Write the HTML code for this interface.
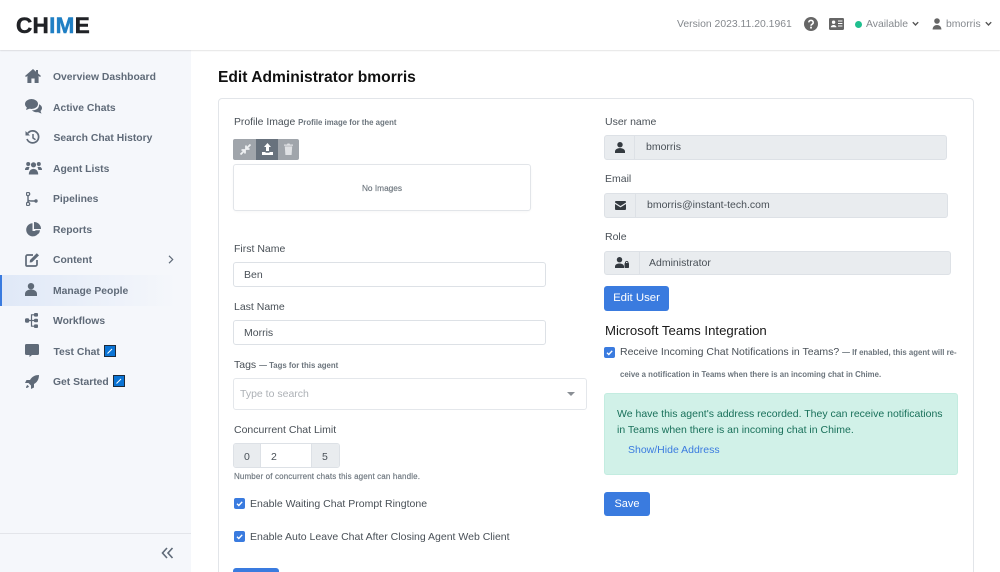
<!DOCTYPE html>
<html><head><meta charset="utf-8"><style>
*{box-sizing:border-box}
html,body{margin:0;padding:0;width:1000px;height:572px;overflow:hidden}
body{background:#fff;position:relative;font-family:"Liberation Sans",sans-serif;font-size:11px;color:#495057}
#w{position:absolute;left:0;top:0;width:1000px;height:572px;overflow:hidden}
.t{position:absolute;white-space:nowrap;line-height:14px}
.b{position:absolute}
.nav{position:absolute;left:53px;font-size:10.35px;font-weight:700;color:#5f6a78;line-height:14px;white-space:nowrap}
svg{position:absolute;display:block}
.inp{position:absolute;border:1px solid #dde1e6;border-radius:3px;background:#fff}
.dis{position:absolute;border:1px solid #dde1e6;border-radius:3px;background:#e9ecef}
.sm{font-size:7.8px;font-weight:700;color:#6c757d}
.btn{position:absolute;background:#3a7bdf;border-radius:3px;color:#fff;font-size:11px;text-align:center}
.cb{position:absolute;width:11px;height:11px;background:#3a7bdf;border-radius:2px}
</style></head><body><div id="w">
<!-- sidebar -->
<div class="b" style="left:0;top:50px;width:191px;height:522px;background:#f5f7fb"></div>
<div class="b" style="left:0;top:275px;width:191px;height:31px;background:linear-gradient(90deg,#dfe8f7,#f5f7fb 92%)"></div>
<div class="b" style="left:0;top:275px;width:2px;height:31px;background:#3a7bdf"></div>
<div class="b" style="left:0;top:533px;width:191px;height:1px;background:#e3e5ea"></div>
<!-- topbar -->
<div class="b" style="left:0;top:0;width:1000px;height:50px;background:#fff;box-shadow:0 1px 1px rgba(0,0,0,.1)"></div>
<div class="t" style="left:16px;top:13px;font-size:22.5px;line-height:25px;font-weight:700;color:#202226;letter-spacing:.3px;-webkit-text-stroke:.5px #202226">CH<span style="color:#1f7fc4;-webkit-text-stroke:.5px #1f7fc4">IM</span>E</div>
<div class="t" style="left:677px;top:18px;font-size:10.4px;color:#85898e">Version 2023.11.20.1961</div>
<svg style="left:804px;top:17px" width="14" height="14" viewBox="0 0 14 14"><circle cx="7" cy="7" r="7" fill="#666"/><path d="M4.8 5.4a2.2 2.1 0 1 1 3.2 1.9c-.7.4-1 .7-1 1.400" fill="none" stroke="#fff" stroke-width="1.5"/><rect x="6.1" y="9.7" width="1.8" height="1.8" fill="#fff"/></svg>
<svg style="left:829px;top:18px" width="15" height="12" viewBox="0 0 15 12"><rect width="15" height="12" rx="1.2" fill="#666"/><circle cx="4.6" cy="4.2" r="1.7" fill="#fff"/><path d="M1.8 9.2c0-3 5.6-3 5.6 0z" fill="#fff"/><path d="M9 3h4.4M9 5.5h4.4M9 8h4.4" stroke="#fff" stroke-width="1"/></svg>
<div class="b" style="left:855px;top:21px;width:7px;height:7px;border-radius:50%;background:#1fbf8f"></div>
<div class="t" style="left:866px;top:18px;font-size:10.4px;color:#85898e">Available</div>
<svg style="left:912px;top:21px" width="7" height="6" viewBox="0 0 7 6"><path d="M.8 1.2 3.5 4 6.2 1.2" fill="none" stroke="#555" stroke-width="1.4"/></svg>
<svg style="left:932px;top:18px" width="10" height="12" viewBox="0 0 10 12"><circle cx="5" cy="3" r="2.8" fill="#666"/><path d="M.6 11.5c0-6 8.8-6 8.8 0z" fill="#666"/></svg>
<div class="t" style="left:946px;top:18px;font-size:10.4px;color:#85898e">bmorris</div>
<svg style="left:985px;top:21px" width="7" height="6" viewBox="0 0 7 6"><path d="M.8 1.2 3.5 4 6.2 1.2" fill="none" stroke="#555" stroke-width="1.4"/></svg>

<!-- nav icons -->
<svg style="left:25px;top:69px" width="16" height="14" viewBox="0 0 16 14"><path d="M8 0 0 7l1 1 1.4-1.1V14h4V9.500h3.200V14h4V6.900L15 8l1-1-3-2.600V1h-2v1.700z" fill="#5f6a78"/></svg>
<svg style="left:25px;top:99px" width="17" height="15" viewBox="0 0 17 15"><ellipse cx="6.5" cy="5" rx="6.5" ry="5" fill="#5f6a78"/><path d="M2 8 1 11l4-1.500z" fill="#5f6a78"/><path d="M14 5.200c1.900.8 3 2.200 3 3.800 0 1.200-.6 2.300-1.500 3l1 2.600-3.500-1.500c-2.500.5-5-.3-6-1.800 4 .2 7.500-2.200 7-6.100z" fill="#5f6a78"/></svg>
<svg style="left:25px;top:130px" width="15" height="15" viewBox="0 0 15 15"><path d="M2.800 3.300A6 6 0 1 1 2 9" fill="none" stroke="#5f6a78" stroke-width="1.7"/><path d="M.5 1v4.500H5z" fill="#5f6a78"/><path d="M8 4v4l2.500 1.700" fill="none" stroke="#5f6a78" stroke-width="1.5"/></svg>
<svg style="left:25px;top:161px" width="17" height="14" viewBox="0 0 17 14"><circle cx="3.2" cy="3" r="2" fill="#5f6a78"/><circle cx="13.8" cy="3" r="2" fill="#5f6a78"/><circle cx="8.5" cy="3.8" r="2.6" fill="#5f6a78"/><path d="M0 9c0-3 2-3.500 4.500-3L3.500 9zM17 9c0-3-2-3.500-4.500-3l1 3z" fill="#5f6a78"/><path d="M3.800 13.500c0-7.500 9.400-7.500 9.400 0z" fill="#5f6a78"/></svg>
<svg style="left:26px;top:192px" width="12" height="14" viewBox="0 0 12 14"><circle cx="2" cy="2" r="1.7" fill="none" stroke="#5f6a78" stroke-width="1.3"/><circle cx="2" cy="12" r="1.7" fill="none" stroke="#5f6a78" stroke-width="1.3"/><path d="M2 4v6M2 7.500c0 1.500 2 1.500 4 1.500h3" fill="none" stroke="#5f6a78" stroke-width="1.4"/><circle cx="10" cy="9" r="1.7" fill="#5f6a78"/></svg>
<svg style="left:26px;top:222px" width="15" height="15" viewBox="0 0 15 15"><path d="M6.500 1.200A6.600 6.600 0 1 0 13.300 9H6.500z" fill="#5f6a78"/><path d="M8 0a7 7 0 0 1 7 7H8z" fill="#5f6a78"/><path d="M14 8.300h-5l3.300 3.700A6 6 0 0 0 14 8.300z" fill="#5f6a78"/></svg>
<svg style="left:25px;top:252px" width="15" height="15" viewBox="0 0 15 15"><path d="M8 3H2.500A1.500 1.500 0 0 0 1 4.500v8.500A1 1 0 0 0 2 14h8.500a1.500 1.500 0 0 0 1.500-1.500V8" fill="none" stroke="#5f6a78" stroke-width="1.7"/><path d="M5 8 11.800 1.200l2.200 2.200L7 10.200 4.700 10.500z" fill="#5f6a78"/></svg>
<svg style="left:168px;top:255px" width="6" height="9" viewBox="0 0 6 9"><path d="M1 .8 4.700 4.500 1 8.200" fill="none" stroke="#5f6a78" stroke-width="1.2"/></svg>
<svg style="left:25px;top:283px" width="12" height="13" viewBox="0 0 12 13"><circle cx="6" cy="3.200" r="3.200" fill="#5f6a78"/><path d="M0 13V11c0-6 12-6 12 0v2z" fill="#5f6a78"/></svg>
<svg style="left:25px;top:313px" width="13" height="15" viewBox="0 0 13 15"><rect y="5.300" width="4.200" height="4.400" rx="1.5" fill="#5f6a78"/><rect x="9" y="0" width="4" height="3.600" rx="1" fill="#5f6a78"/><rect x="9" y="5.700" width="4" height="3.600" rx="1" fill="#5f6a78"/><rect x="9" y="11.400" width="4" height="3.600" rx="1" fill="#5f6a78"/><path d="M9 1.800H6.500v11.400H9M4 7.500h5" fill="none" stroke="#5f6a78" stroke-width="1.2"/></svg>
<svg style="left:25px;top:344px" width="14" height="13" viewBox="0 0 14 13"><path d="M1.500 0h11A1.500 1.500 0 0 1 14 1.500v8a1.500 1.500 0 0 1-1.500 1.500H7l-2.500 2V11h-3A1.500 1.500 0 0 1 0 9.500v-8A1.500 1.500 0 0 1 1.500 0z" fill="#5f6a78"/></svg>
<svg style="left:25px;top:375px" width="14" height="14" viewBox="0 0 14 14"><path d="M14 0c-4 0-7 1.500-9 5H1.500L0 8h3.500l2.500 2.500V14l3-1.500V9c3.500-2 5-5 5-9z" fill="#5f6a78"/><path d="M2.500 10c-1 .5-1.500 2-1.500 3 1 0 2.500-.5 3-1.500z" fill="#5f6a78"/></svg>

<div class="nav" style="top:71px">Overview Dashboard</div>
<div class="nav" style="top:102px">Active Chats</div>
<div class="nav" style="top:132px;left:53.5px">Search Chat History</div>
<div class="nav" style="top:163px">Agent Lists</div>
<div class="nav" style="top:193px">Pipelines</div>
<div class="nav" style="top:224px">Reports</div>
<div class="nav" style="top:254px">Content</div>
<div class="nav" style="top:285px">Manage People</div>
<div class="nav" style="top:315px">Workflows</div>
<div class="nav" style="top:346px;left:53.5px">Test Chat</div>
<div class="nav" style="top:376px">Get Started</div>
<svg style="left:104px;top:345px" width="12" height="12" viewBox="0 0 12 12"><rect x=".5" y=".5" width="11" height="11" fill="#0b74d5" stroke="#1d2a3a"/><path d="M3.500 8.500 8 4" stroke="#fff" stroke-width="1"/></svg>
<svg style="left:113px;top:375px" width="12" height="12" viewBox="0 0 12 12"><rect x=".5" y=".5" width="11" height="11" fill="#0b74d5" stroke="#1d2a3a"/><path d="M3.500 8.500 8 4" stroke="#fff" stroke-width="1"/></svg>
<svg style="left:161px;top:547px" width="13" height="12" viewBox="0 0 13 12"><path d="M6 1 1.500 6 6 11M11.500 1 7 6l4.500 5" fill="none" stroke="#5f6a78" stroke-width="1.6"/></svg>

<!-- main -->
<div class="t" style="left:218px;top:69px;font-size:15.6px;line-height:18px;font-weight:700;color:#111">Edit Administrator bmorris</div>
<div class="b" style="left:218px;top:98px;width:756px;height:490px;border:1px solid #e2e5e9;border-radius:4px;background:#fff"></div>

<!-- left column -->
<div class="t" style="left:234px;top:116px;font-size:10.4px">Profile Image <span class="sm">Profile image for the agent</span></div>
<div class="b" style="left:233px;top:139px;width:66px;height:21px;background:#a0a5ab;border-radius:2px"></div>
<div class="b" style="left:256px;top:139px;width:22px;height:21px;background:#68727d"></div>
<svg style="left:240px;top:144px" width="11" height="11" viewBox="0 0 11 11"><path d="M6.500 4.500 10.500.5M6 1.500V5h3.500M4.500 6.500l-4 4M1.500 6H5v3.500" fill="none" stroke="#eef0f2" stroke-width="1.8"/></svg>
<svg style="left:262px;top:143px" width="11" height="12" viewBox="0 0 11 12"><path d="M5.500 0 9 4H7v4H4V4H2z" fill="#fff"/><path d="M0 9h3.500v.8h4V9H11v3H0z" fill="#fff"/></svg>
<svg style="left:284px;top:143px" width="9" height="12" viewBox="0 0 9 12"><path d="M0 1.500h3L3.500.5h2l.5 1h3v1.200H0zM.8 3.400h7.400L7.600 12H1.400z" fill="#dfe1e4"/></svg>
<div class="b" style="left:233px;top:164px;width:298px;height:47px;border:1px solid #e2e5e9;border-radius:3px;background:#fff;box-shadow:0 1px 2px rgba(0,0,0,.03)"></div>
<div class="t" style="left:233px;width:298px;text-align:center;top:181px;font-size:8.3px;color:#6c757d;-webkit-text-stroke:.15px #6c757d">No Images</div>

<div class="t" style="left:234px;top:242px;font-size:10.5px">First Name</div>
<div class="inp" style="left:233px;top:262px;width:313px;height:25px"></div>
<div class="t" style="left:244px;top:268px;font-size:10.5px">Ben</div>
<div class="t" style="left:234px;top:300px;font-size:10.5px">Last Name</div>
<div class="inp" style="left:233px;top:320px;width:313px;height:25px"></div>
<div class="t" style="left:244px;top:326px;font-size:10.5px">Morris</div>
<div class="t" style="left:234px;top:358px;font-size:10.5px">Tags <span class="sm">— Tags for this agent</span></div>
<div class="b" style="left:233px;top:378px;width:354px;height:32px;border:1px solid #e4e7eb;border-radius:3px;background:#fff"></div>
<div class="t" style="left:240px;top:387px;font-size:10.5px;color:#adb1b6">Type to search</div>
<div class="b" style="left:567px;top:392px;width:0;height:0;border-left:4px solid transparent;border-right:4px solid transparent;border-top:4px solid #8a8f95"></div>

<div class="t" style="left:234px;top:423px;font-size:10.5px">Concurrent Chat Limit</div>
<div class="b" style="left:233px;top:443px;width:107px;height:25px;border:1px solid #dde1e6;border-radius:3px;background:#fff;overflow:hidden">
 <div class="b" style="left:0;top:0;width:27px;height:23px;background:#e9ecef;border-right:1px solid #dde1e6"></div>
 <div class="b" style="right:0;top:0;width:28px;height:23px;background:#e9ecef;border-left:1px solid #dde1e6"></div>
</div>
<div class="t" style="left:244px;top:450px;font-size:10.5px">0</div>
<div class="t" style="left:271px;top:450px;font-size:10.5px">2</div>
<div class="t" style="left:322px;top:450px;font-size:10.5px">5</div>
<div class="t" style="left:234px;top:470px;font-size:8px;color:#6c757d;letter-spacing:.14px;-webkit-text-stroke:.15px #6c757d">Number of concurrent chats this agent can handle.</div>

<div class="cb" style="left:234px;top:498px"></div>
<svg style="left:234px;top:498px" width="11" height="11" viewBox="0 0 11 11"><path d="M3 5.800 4.800 7.500 8.200 3.800" fill="none" stroke="#fff" stroke-width="1.4"/></svg>
<div class="t" style="left:250px;top:497px;font-size:10.5px">Enable Waiting Chat Prompt Ringtone</div>
<div class="cb" style="left:234px;top:531px"></div>
<svg style="left:234px;top:531px" width="11" height="11" viewBox="0 0 11 11"><path d="M3 5.800 4.800 7.500 8.200 3.800" fill="none" stroke="#fff" stroke-width="1.4"/></svg>
<div class="t" style="left:250px;top:530px;font-size:10.5px">Enable Auto Leave Chat After Closing Agent Web Client</div>
<div class="btn" style="left:233px;top:568px;width:46px;height:23px"></div>

<!-- right column -->
<div class="t" style="left:605px;top:115px;font-size:10.5px">User name</div>
<div class="dis" style="left:604px;top:135px;width:343px;height:25px"></div>
<div class="b" style="left:634px;top:136px;width:1px;height:23px;background:#dde1e6"></div>
<svg style="left:615px;top:142px" width="10" height="11" viewBox="0 0 10 11"><circle cx="5" cy="2.700" r="2.700" fill="#343a40"/><path d="M0 11V9.500C0 5 10 5 10 9.500V11z" fill="#343a40"/></svg>
<div class="t" style="left:646px;top:140px;font-size:10.5px">bmorris</div>

<div class="t" style="left:605px;top:172px;font-size:10.5px">Email</div>
<div class="dis" style="left:604px;top:193px;width:344px;height:25px"></div>
<div class="b" style="left:635px;top:194px;width:1px;height:23px;background:#dde1e6"></div>
<svg style="left:615px;top:201px" width="11" height="9" viewBox="0 0 11 9"><path d="M1 0h9a1 1 0 0 1 1 1v.5L5.500 5 0 1.500V1a1 1 0 0 1 1-1zM0 3l5.500 3.400L11 3v5a1 1 0 0 1-1 1H1a1 1 0 0 1-1-1z" fill="#343a40"/></svg>
<div class="t" style="left:647px;top:198px;font-size:10.5px">bmorris@instant-tech.com</div>

<div class="t" style="left:605px;top:230px;font-size:10.5px">Role</div>
<div class="dis" style="left:604px;top:251px;width:347px;height:24px"></div>
<div class="b" style="left:639px;top:252px;width:1px;height:22px;background:#dde1e6"></div>
<svg style="left:615px;top:257px" width="14" height="11" viewBox="0 0 14 11"><circle cx="4.500" cy="2.700" r="2.700" fill="#343a40"/><path d="M0 11V9.500C0 5.500 9 5.500 9 9.500V11z" fill="#343a40"/><rect x="9.500" y="6" width="4.500" height="5" rx=".7" fill="#343a40"/><path d="M10.500 6.500V5.300a1.300 1.300 0 0 1 2.500 0v1.200" fill="none" stroke="#343a40"/></svg>
<div class="t" style="left:649px;top:256px;font-size:10.5px">Administrator</div>

<div class="btn" style="left:604px;top:286px;width:65px;height:25px;line-height:25px;font-size:11.4px">Edit User</div>
<div class="t" style="left:605px;top:323px;font-size:13.2px;line-height:16px;color:#1a1a1a">Microsoft Teams Integration</div>
<div class="cb" style="left:604px;top:347px"></div>
<svg style="left:604px;top:347px" width="11" height="11" viewBox="0 0 11 11"><path d="M3 5.800 4.800 7.500 8.200 3.800" fill="none" stroke="#fff" stroke-width="1.4"/></svg>
<div class="t" style="left:620px;top:345px;font-size:10.5px">Receive Incoming Chat Notifications in Teams? <span class="sm">— If enabled, this agent will re-</span></div>
<div class="t sm" style="left:620px;top:368px">ceive a notification in Teams when there is an incoming chat in Chime.</div>

<div class="b" style="left:604px;top:393px;width:354px;height:82px;background:#d1f1e8;border:1px solid #c3ece0;border-radius:3px"></div>
<div class="t" style="left:617px;top:407px;font-size:10.5px;color:#19705a">We have this agent's address recorded. They can receive notifications</div>
<div class="t" style="left:617px;top:423px;font-size:10.5px;color:#19705a">in Teams when there is an incoming chat in Chime.</div>
<div class="t" style="left:628px;top:443px;font-size:10.5px;color:#3a7bdf">Show/Hide Address</div>
<div class="btn" style="left:604px;top:492px;width:46px;height:24px;line-height:24px">Save</div>
</div></body></html>
